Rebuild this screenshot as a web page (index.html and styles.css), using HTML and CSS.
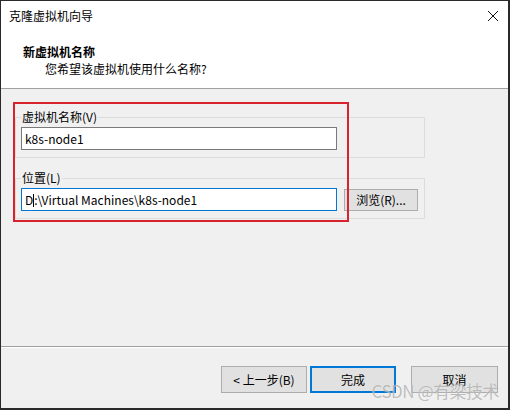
FILE: index.html
```html
<!DOCTYPE html>
<html lang="zh-CN">
<head>
<meta charset="utf-8">
<title>克隆虚拟机向导</title>
<link rel="stylesheet" href="styles.css">
</head>
<body>
<div class="window">
  <div class="titlebar">
    <span class="title">克隆虚拟机向导</span>
    <svg class="close" width="12" height="12" viewBox="0 0 12 12"><path d="M1 1L11 11M11 1L1 11" stroke="#111" stroke-width="1" fill="none"/></svg>
  </div>
  <div class="header">
    <div class="h-title">新虚拟机名称</div>
    <div class="h-sub">您希望该虚拟机使用什么名称?</div>
  </div>
  <div class="body">
    <fieldset class="group">
      <legend>虚拟机名称(V)</legend>
      <div class="row">
        <div class="textbox">k8s-node1</div>
      </div>
    </fieldset>
    <fieldset class="group second">
      <legend>位置(L)</legend>
      <div class="row">
        <div class="textbox focused">D<span class="caret"></span>:\Virtual Machines\k8s-node1</div>
        <div class="btn browse">浏览(R)...</div>
      </div>
    </fieldset>
    <div class="highlight"></div>
  </div>
  <div class="footer">
    <div class="btn">&lt; 上一步(B)</div>
    <div class="btn default">完成</div>
    <div class="btn cancel">取消</div>
    <div class="watermark">CSDN @有梁技术</div>
  </div>
</div>
</body>
</html>
```
FILE: styles.css
```css
* { box-sizing: border-box; }
html, body { margin: 0; padding: 0; }
body {
  width: 510px;
  height: 410px;
  font-family: "Noto Sans CJK SC", "Noto Sans", sans-serif;
  font-size: 12px;
  color: #000;
  background: #f0f0f0;
}
.window {
  width: 510px;
  height: 410px;
  border: 1px solid #2a2a2a;
  border-right-width: 2px;
  border-bottom-width: 2px;
  display: flex;
  flex-direction: column;
  background: #f0f0f0;
  position: relative;
}
.titlebar {
  height: 29px;
  background: #fff;
  display: flex;
  align-items: center;
  justify-content: space-between;
  padding: 0 9px 0 8px;
  line-height: 16px;
}
.header {
  height: 59px;
  background: #fff;
  border-bottom: 1px solid #a0a0a0;
  padding: 13px 0 0 22px;
  line-height: 17px;
}
.h-title { font-weight: bold; }
.h-sub { padding-left: 22px; }
.body {
  flex: 1;
  position: relative;
  padding: 20px 83px 0 14px;
  border-bottom: 1px solid #a0a0a0;
  box-shadow: 0 1px 0 #fff;
}
.group {
  margin: 0;
  border: 1px solid #dcdcdc;
  padding: 2px 6px 7px 5px;
  min-width: 0;
}
.group legend {
  padding: 0 1px;
  line-height: 16px;
  margin-left: 0;
}
.second { margin-top: 12px; }
.row {
  display: flex;
  align-items: center;
  gap: 7px;
}
.textbox {
  width: 316px;
  height: 23px;
  background: #fff;
  border: 1px solid #7a7a7a;
  padding: 0 3px;
  line-height: 21px;
  white-space: nowrap;
}
.textbox.focused { border-color: #0078d7; }
.caret {
  display: inline-block;
  width: 1px;
  height: 13px;
  background: #000;
  vertical-align: -2px;
}
.btn {
  width: 86px;
  height: 27px;
  background: #e1e1e1;
  border: 1px solid #adadad;
  display: flex;
  align-items: center;
  justify-content: center;
  line-height: 16px;
}
.browse { width: 74px; height: 22px; }
.highlight {
  position: absolute;
  left: 12px;
  top: 13px;
  width: 336px;
  height: 120px;
  border: 2px solid #d8232d;
  pointer-events: none;
}
.footer {
  height: 61px;
  display: flex;
  justify-content: flex-end;
  align-items: flex-start;
  padding: 19px 10px 0 0;
  gap: 3px;
  position: relative;
}
.default { border: 2px solid #0078d7; }
.cancel { margin-left: 12px; width: 87px; }
.watermark {
  position: absolute;
  right: 9px;
  top: 34px;
  font-size: 17px;
  line-height: 20px;
  letter-spacing: -0.5px;
  color: rgba(110, 110, 110, 0.45);
  text-shadow: 0 0 1px rgba(255,255,255,0.8);
  pointer-events: none;
}
```
